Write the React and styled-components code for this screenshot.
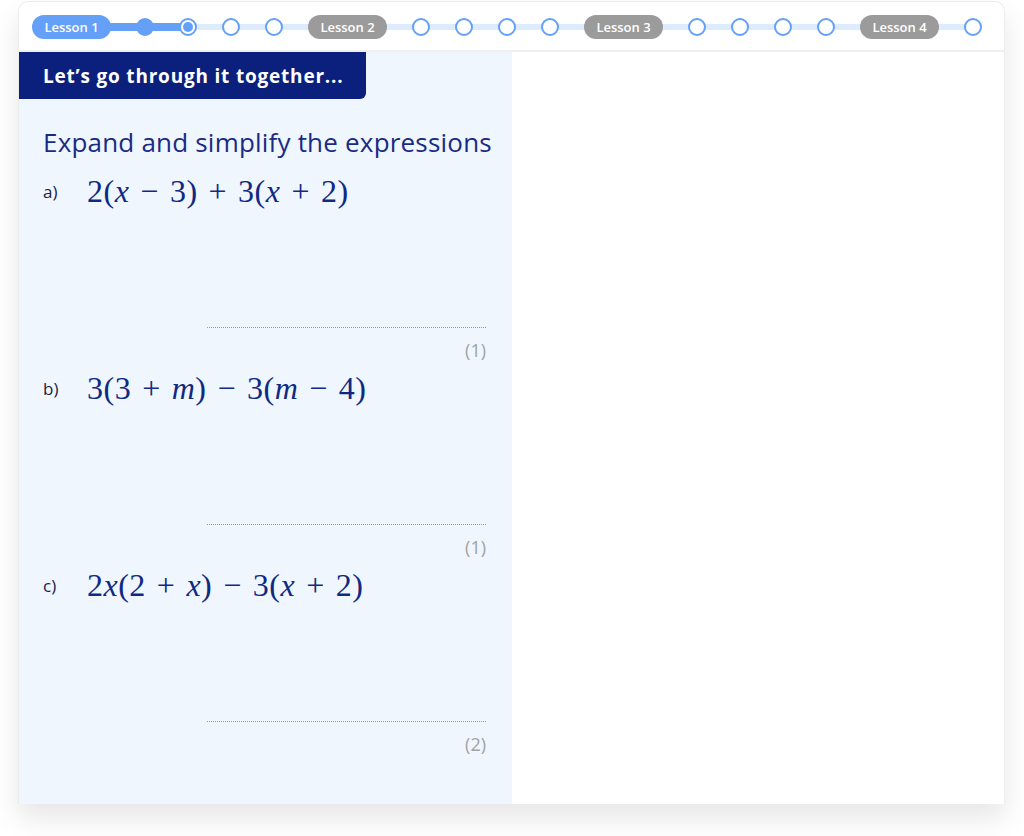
import React from 'react';
import styled, { createGlobalStyle } from 'styled-components';

const GlobalStyle = createGlobalStyle`
  html, body {
    margin: 0;
    padding: 0;
    background: #fff;
  }
  body {
    font-family: "Open Sans", "Noto Sans", sans-serif;
  }
`;

const Page = styled.div`
  width: 1024px;
  height: 836px;
  padding: 1px 19px 0 18px;
  box-sizing: border-box;
`;

const Card = styled.div`
  height: 803px;
  display: flex;
  flex-direction: column;
  border: 1px solid #ececec;
  border-bottom: none;
  border-radius: 10px 10px 0 0;
  background: #fff;
  box-shadow: 0 14px 28px rgba(0, 0, 0, 0.1);
  box-sizing: border-box;
  overflow: hidden;
`;

const Header = styled.div`
  height: 48px;
  flex-shrink: 0;
  border-bottom: 2px solid #efefef;
  display: flex;
  align-items: center;
  padding-left: 13px;
`;

const Track = styled.div`
  position: relative;
  display: flex;
  align-items: center;
  gap: 25px;
  margin-top: 2px;

  &::before {
    content: '';
    position: absolute;
    left: 10px;
    right: 10px;
    top: 50%;
    height: 6px;
    margin-top: -3px;
    background: #dcebfd;
  }

  &::after {
    content: '';
    position: absolute;
    left: 10px;
    width: 150px;
    top: 50%;
    height: 8px;
    margin-top: -4px;
    background: #64a0f8;
  }
`;

const Pill = styled.div`
  position: relative;
  z-index: 1;
  width: 79px;
  height: 24px;
  border-radius: 12px;
  background: ${(p) => (p.active ? '#64a0f8' : '#9b9b9b')};
  color: #fff;
  font-size: 13px;
  font-weight: 600;
  display: flex;
  align-items: center;
  justify-content: center;
`;

const Dot = styled.div`
  position: relative;
  z-index: 1;
  width: 18px;
  height: 18px;
  box-sizing: border-box;
  border-radius: 50%;
  border: 2px solid #64a0f8;
  background: ${(p) => (p.state === 'done' ? '#64a0f8' : '#fff')};
  display: flex;
  align-items: center;
  justify-content: center;

  &::after {
    content: '';
    display: ${(p) => (p.state === 'current' ? 'block' : 'none')};
    width: 10px;
    height: 10px;
    border-radius: 50%;
    background: #64a0f8;
  }
`;

const Body = styled.div`
  flex: 1;
  display: grid;
  grid-template-columns: 493px 1fr;
`;

const LeftPanel = styled.div`
  background: #eff6fe;
  display: flex;
  flex-direction: column;
`;

const Banner = styled.div`
  width: 347px;
  height: 47px;
  flex-shrink: 0;
  box-sizing: border-box;
  padding-left: 24px;
  background: #0b1f7c;
  color: #fff;
  font-size: 19px;
  font-weight: 700;
  letter-spacing: 0.8px;
  display: flex;
  align-items: center;
  border-radius: 0 0 6px 0;
`;

const Heading = styled.h2`
  margin: 27px 0 13px 24px;
  font-size: 26px;
  font-weight: 400;
  letter-spacing: 0.2px;
  color: #1a2b84;
  line-height: 32px;
  white-space: nowrap;
`;

const Question = styled.div`
  display: flex;
  flex-direction: column;
  flex-shrink: 0;
  height: 197px;
  padding: 0 26px 0 24px;
`;

const QuestionRow = styled.div`
  display: flex;
  align-items: center;
  height: 40px;
`;

const Label = styled.span`
  width: 44px;
  font-size: 17px;
  color: #1c2244;
`;

const Expr = styled.span`
  font-family: "Liberation Serif", "DejaVu Serif", serif;
  font-size: 32px;
  color: #102a83;
  letter-spacing: 0.5px;

  i {
    font-style: italic;
  }
`;

const Op = styled.span`
  margin: 0 11px;
`;

const AnswerLine = styled.div`
  margin: 116px 0 0 164px;
  border-top: 1px dotted #9a9a9a;
`;

const Marks = styled.div`
  align-self: flex-end;
  margin-top: 10px;
  font-size: 18px;
  color: #a3a3a3;
  line-height: 24px;
`;

const RightPanel = styled.div`
  background: #fff;
`;

const progress = [
  { type: 'pill', label: 'Lesson 1', active: true },
  { type: 'dot', state: 'done' },
  { type: 'dot', state: 'current' },
  { type: 'dot' },
  { type: 'dot' },
  { type: 'pill', label: 'Lesson 2' },
  { type: 'dot' },
  { type: 'dot' },
  { type: 'dot' },
  { type: 'dot' },
  { type: 'pill', label: 'Lesson 3' },
  { type: 'dot' },
  { type: 'dot' },
  { type: 'dot' },
  { type: 'dot' },
  { type: 'pill', label: 'Lesson 4' },
  { type: 'dot' },
];

const questions = [
  {
    label: 'a)',
    marks: '(1)',
    expr: (
      <>
        2(<i>x</i><Op>−</Op>3)<Op>+</Op>3(<i>x</i><Op>+</Op>2)
      </>
    ),
  },
  {
    label: 'b)',
    marks: '(1)',
    expr: (
      <>
        3(3<Op>+</Op><i>m</i>)<Op>−</Op>3(<i>m</i><Op>−</Op>4)
      </>
    ),
  },
  {
    label: 'c)',
    marks: '(2)',
    expr: (
      <>
        2<i>x</i>(2<Op>+</Op><i>x</i>)<Op>−</Op>3(<i>x</i><Op>+</Op>2)
      </>
    ),
  },
];

const App = () => {
  return (
    <>
      <GlobalStyle />
      <Page>
        <Card>
          <Header>
            <Track>
              {progress.map((item, i) =>
                item.type === 'pill' ? (
                  <Pill key={i} active={item.active}>
                    {item.label}
                  </Pill>
                ) : (
                  <Dot key={i} state={item.state} />
                ),
              )}
            </Track>
          </Header>
          <Body>
            <LeftPanel>
              <Banner>Let’s go through it together...</Banner>
              <Heading>Expand and simplify the expressions</Heading>
              {questions.map((q) => (
                <Question key={q.label}>
                  <QuestionRow>
                    <Label>{q.label}</Label>
                    <Expr>{q.expr}</Expr>
                  </QuestionRow>
                  <AnswerLine />
                  <Marks>{q.marks}</Marks>
                </Question>
              ))}
            </LeftPanel>
            <RightPanel />
          </Body>
        </Card>
      </Page>
    </>
  );
};

export default App;
